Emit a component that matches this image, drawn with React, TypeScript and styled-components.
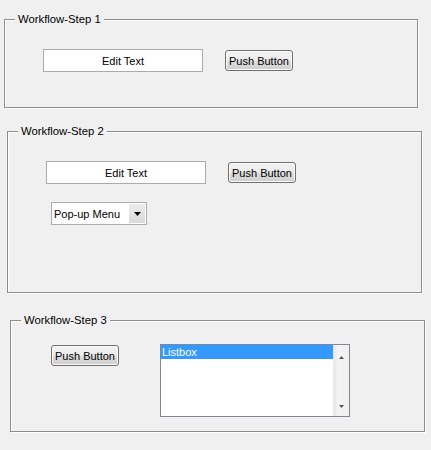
import styled, { createGlobalStyle } from "styled-components";

const GlobalStyle = createGlobalStyle`
  html, body {
    margin: 0;
    padding: 0;
    background: #f0f0f0;
  }
  body {
    font-family: "Liberation Sans", Arial, sans-serif;
    font-size: 11px;
    color: #000;
  }
`;

const Page = styled.div`
  width: 431px;
  min-height: 450px;
  padding-top: 19px;
  box-sizing: border-box;
  background: #f0f0f0;
`;

// etched panel, like the ones in a GUIDE figure
const Panel = styled.div<{ $left: number; $top: number; $w: number; $h: number; $padLeft: number; $padTop: number }>`
  position: relative;
  box-sizing: border-box;
  margin-left: ${(p) => p.$left}px;
  margin-top: ${(p) => p.$top}px;
  width: ${(p) => p.$w}px;
  height: ${(p) => p.$h}px;
  border: 1px solid #8c8c8c;
  box-shadow: 1px 1px 0 #fff, inset 1px 1px 0 #fff;
  padding: ${(p) => p.$padTop}px 0 0 ${(p) => p.$padLeft}px;
  display: flex;
  flex-direction: column;
`;

const Title = styled.span`
  position: absolute;
  top: -7px;
  left: 10px;
  padding: 0 3px;
  line-height: 13px;
  font-size: 11.3px;
  background: #f0f0f0;
  white-space: nowrap;
`;

const Row = styled.div<{ $gap: number; $align?: string }>`
  display: flex;
  align-items: ${(p) => p.$align || "center"};
  gap: ${(p) => p.$gap}px;
`;

const EditText = styled.div`
  box-sizing: border-box;
  width: 160px;
  height: 23px;
  background: #fff;
  border: 1px solid #ababab;
  display: flex;
  align-items: center;
  justify-content: center;
`;

const PushButton = styled.button<{ $nudge?: number }>`
  box-sizing: border-box;
  width: 68px;
  height: 21px;
  margin-top: ${(p) => p.$nudge || 0}px;
  padding: 0;
  font: inherit;
  color: #000;
  border: 1px solid #707070;
  border-radius: 3px;
  background: linear-gradient(#f2f2f2 0%, #ebebeb 50%, #dddddd 51%, #cfcfcf 100%);
  box-shadow: inset 0 0 0 1px #fbfbfb;
`;

const Popup = styled.div`
  box-sizing: border-box;
  width: 96px;
  height: 23px;
  margin: 18px 0 0 5px;
  background: #fff;
  border: 1px solid #acacac;
  display: flex;
  align-items: stretch;
`;

const PopupLabel = styled.span`
  flex: 1;
  padding-left: 2px;
  display: flex;
  align-items: center;
`;

const PopupArrow = styled.span`
  width: 16px;
  margin: 1px;
  background: linear-gradient(#ececec, #d9d9d9);
  display: flex;
  align-items: center;
  justify-content: center;
`;

const ListBox = styled.div`
  box-sizing: border-box;
  width: 190px;
  height: 73px;
  background: #fff;
  border: 1px solid #828790;
  display: flex;
`;

const ListItems = styled.div`
  flex: 1;
`;

const ListItem = styled.div<{ $selected?: boolean }>`
  height: 14px;
  line-height: 14px;
  padding-left: 1px;
  background: ${(p) => (p.$selected ? "#3399ff" : "transparent")};
  color: ${(p) => (p.$selected ? "#fff" : "#000")};
`;

const ScrollBar = styled.div`
  width: 16px;
  background: linear-gradient(90deg, #e6e6e6, #f3f3f3 30%, #f0f0f0);
  display: flex;
  flex-direction: column;
  justify-content: space-between;
  align-items: center;
  padding: 11px 0 8px;
  box-sizing: border-box;
`;

const Tri = ({ up, color = "#000", w = 7, h = 4 }: { up?: boolean; color?: string; w?: number; h?: number }) => (
  <svg width={w} height={h} viewBox={`0 0 ${w} ${h}`}>
    <polygon points={up ? `0,${h} ${w},${h} ${w / 2},0` : `0,0 ${w},0 ${w / 2},${h}`} fill={color} />
  </svg>
);

export default function App() {
  return (
    <Page>
      <GlobalStyle />
      <Panel $left={4} $top={0} $w={414} $h={89} $padLeft={38} $padTop={29}>
        <Title>Workflow-Step 1</Title>
        <Row $gap={22}>
          <EditText>Edit Text</EditText>
          <PushButton>Push Button</PushButton>
        </Row>
      </Panel>

      <Panel $left={7} $top={23} $w={415} $h={162} $padLeft={38} $padTop={29}>
        <Title>Workflow-Step 2</Title>
        <Row $gap={22}>
          <EditText>Edit Text</EditText>
          <PushButton>Push Button</PushButton>
        </Row>
        <Popup>
          <PopupLabel>Pop-up Menu</PopupLabel>
          <PopupArrow>
            <Tri />
          </PopupArrow>
        </Popup>
      </Panel>

      <Panel $left={10} $top={27} $w={415} $h={112} $padLeft={40} $padTop={23}>
        <Title>Workflow-Step 3</Title>
        <Row $gap={41} $align="flex-start">
          <PushButton $nudge={1}>Push Button</PushButton>
          <ListBox>
            <ListItems>
              <ListItem $selected>Listbox</ListItem>
            </ListItems>
            <ScrollBar>
              <Tri up color="#555" w={5} h={3} />
              <Tri color="#555" w={5} h={3} />
            </ScrollBar>
          </ListBox>
        </Row>
      </Panel>
    </Page>
  );
}
